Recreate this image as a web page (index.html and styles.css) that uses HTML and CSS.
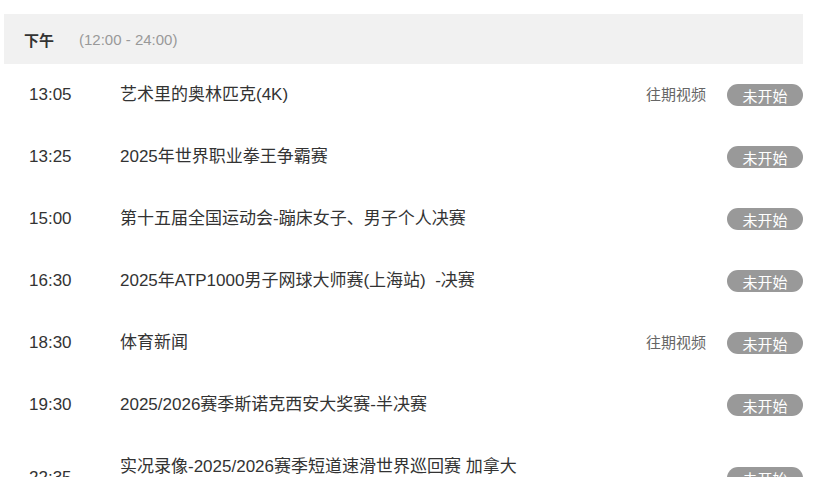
FILE: index.html
```html
<!DOCTYPE html>
<html lang="zh-CN">
<head>
<meta charset="utf-8">
<link rel="stylesheet" href="styles.css">
</head>
<body>
<div class="schedule">
  <div class="period">
    <span class="period-name">下午</span>
    <span class="period-range">(12:00 - 24:00)</span>
  </div>
  <ul class="list">
    <li class="item">
      <span class="time">13:05</span>
      <span class="title">艺术里的奥林匹克(4K)</span>
      <span class="replay">往期视频</span>
      <span class="status">未开始</span>
    </li>
    <li class="item">
      <span class="time">13:25</span>
      <span class="title">2025年世界职业拳王争霸赛</span>
      <span class="status">未开始</span>
    </li>
    <li class="item">
      <span class="time">15:00</span>
      <span class="title">第十五届全国运动会-蹦床女子、男子个人决赛</span>
      <span class="status">未开始</span>
    </li>
    <li class="item">
      <span class="time">16:30</span>
      <span class="title">2025年ATP1000男子网球大师赛(上海站)&nbsp; -决赛</span>
      <span class="status">未开始</span>
    </li>
    <li class="item">
      <span class="time">18:30</span>
      <span class="title">体育新闻</span>
      <span class="replay">往期视频</span>
      <span class="status">未开始</span>
    </li>
    <li class="item">
      <span class="time">19:30</span>
      <span class="title">2025/2026赛季斯诺克西安大奖赛-半决赛</span>
      <span class="status">未开始</span>
    </li>
    <li class="item">
      <span class="time">22:35</span>
      <span class="title">实况录像-2025/2026赛季短道速滑世界巡回赛 加拿大站 男子500米决赛</span>
      <span class="status">未开始</span>
    </li>
  </ul>
</div>
</body>
</html>
```

FILE: styles.css
```css
* { box-sizing: border-box; }
html, body {
  margin: 0;
  padding: 0;
  background: #fff;
}
body {
  font-family: "Liberation Sans", "Noto Sans CJK SC", sans-serif;
  color: #333;
}
.schedule {
  width: 799px;
  margin-left: 4px;
  padding-top: 14px;
}
.period {
  height: 50px;
  background: #f1f1f1;
  display: flex;
  align-items: center;
  padding-left: 20px;
  font-size: 15px;
}
.period-name {
  font-weight: bold;
  color: #333;
  margin-right: 25px;
}
.period-range {
  color: #999;
}
.list {
  list-style: none;
  margin: 0;
  padding: 0;
}
.item {
  display: flex;
  align-items: center;
  padding: 20px 0;
}
.time {
  width: 116px;
  padding-left: 25px;
  font-size: 17px;
  line-height: 22px;
  color: #333;
}
.title {
  width: 410px;
  font-size: 17px;
  line-height: 22px;
  color: #333;
}
.replay {
  margin-left: auto;
  font-size: 15px;
  line-height: 20px;
  color: #666;
}
.status {
  margin-left: auto;
  width: 76px;
  height: 22px;
  border-radius: 11px;
  background: #999;
  color: #fff;
  font-size: 15px;
  display: flex;
  align-items: center;
  justify-content: center;
}
.replay + .status {
  margin-left: 21px;
}
```
